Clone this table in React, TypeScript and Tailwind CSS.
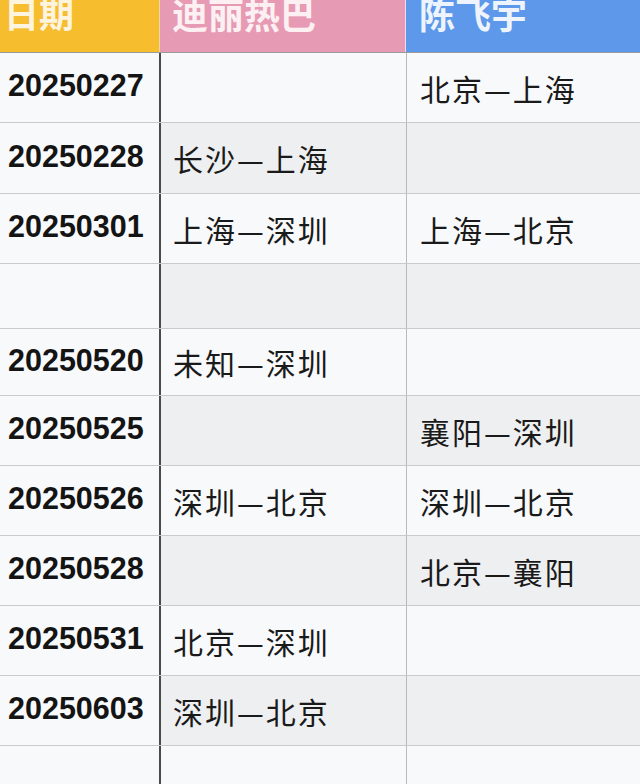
import React from "react";

type Row = { date: string; a: string; b: string; h: string };

const rows: Row[] = [
  { date: "20250227", a: "", b: "北京—上海", h: "h-[70px]" },
  { date: "20250228", a: "长沙—上海", b: "", h: "h-[71px]" },
  { date: "20250301", a: "上海—深圳", b: "上海—北京", h: "h-[70px]" },
  { date: "", a: "", b: "", h: "h-[65px]" },
  { date: "20250520", a: "未知—深圳", b: "", h: "h-[67px]" },
  { date: "20250525", a: "", b: "襄阳—深圳", h: "h-[70px]" },
  { date: "20250526", a: "深圳—北京", b: "深圳—北京", h: "h-[70px]" },
  { date: "20250528", a: "", b: "北京—襄阳", h: "h-[70px]" },
  { date: "20250531", a: "北京—深圳", b: "", h: "h-[70px]" },
  { date: "20250603", a: "深圳—北京", b: "", h: "h-[70px]" },
  { date: "", a: "", b: "", h: "h-[70px]" },
];

const cjk = { fontFamily: '"Noto Sans CJK SC", sans-serif' };
const latin = { fontFamily: '"Liberation Sans", Arial, sans-serif' };

export default function App() {
  return (
    <div className="w-[640px] h-[784px] overflow-hidden bg-[#f8f9fb]">
      <div className="flex h-[53px] border-b border-[#9a9a9a]">
        <div className="w-[160px] shrink-0 bg-[#f6bd2f] border-r border-[#f3d9a0] flex items-start pl-[4px]">
          <span style={cjk} className="text-[35px] leading-[36px] -mt-[5px] font-bold text-[#fdf4e0]">日期</span>
        </div>
        <div className="w-[246px] shrink-0 bg-[#e79ab4] border-r border-[#f4dce6] flex items-start pl-[12px]">
          <span style={cjk} className="text-[36px] leading-[36px] -mt-[5px] font-bold text-[#fdf0f3]">迪丽热巴</span>
        </div>
        <div className="flex-1 bg-[#5d98ea] flex items-start pl-[13px]">
          <span style={cjk} className="text-[36px] leading-[36px] -mt-[5px] font-bold text-[#eef4fd]">陈飞宇</span>
        </div>
      </div>
      {rows.map((r, i) => {
        const gray = i % 2 === 1;
        return (
          <div key={i} className={`flex ${r.h} border-b border-[#c9cacc]`}>
            <div className="w-[161px] shrink-0 border-r-2 border-[#4a4a4a] bg-[#f8f9fb] flex items-center pl-[8px] pb-[4px]">
              <span style={latin} className="text-[30.5px] font-bold text-[#141414] leading-none">{r.date}</span>
            </div>
            <div className={`w-[246px] shrink-0 border-r border-[#b8b9bb] flex items-center pl-[12px] ${gray ? "bg-[#eeeff1]" : "bg-[#f8f9fb]"}`}>
              <span style={cjk} className="text-[30px] tracking-[2px] text-[#1a1a1a] leading-none">{r.a}</span>
            </div>
            <div className={`flex-1 flex items-center pl-[13px] ${gray ? "bg-[#eeeff1]" : "bg-[#f8f9fb]"}`}>
              <span style={cjk} className="text-[30px] tracking-[2px] text-[#1a1a1a] leading-none">{r.b}</span>
            </div>
          </div>
        );
      })}
    </div>
  );
}
